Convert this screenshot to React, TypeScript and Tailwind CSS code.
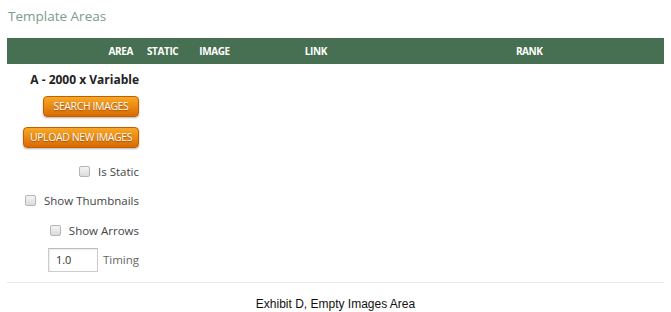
import React from "react";

const font = { fontFamily: '"Open Sans", "DejaVu Sans", sans-serif' };

function Check({ label }: { label: string }) {
  return (
    <div className="flex items-center justify-end gap-[8px]">
      <span className="w-[11px] h-[11px] rounded-[2px] border border-[#b5b5b5] bg-gradient-to-b from-[#f4f4f4] to-[#dcdcdc]" />
      <span className="text-[11.5px] text-[#444]">{label}</span>
    </div>
  );
}

function OrangeBtn({ label, w }: { label: string; w: string }) {
  return (
    <button
      className={`${w} h-[21px] rounded-[4px] border border-[#c06000] bg-gradient-to-b from-[#f7a825] to-[#d96a00] text-white text-[10.5px] tracking-[-0.4px] [text-shadow:0_1px_1px_rgba(120,50,0,0.6)] shadow-[0_1px_2px_rgba(0,0,0,0.3)] flex items-center justify-center`}
    >
      {label}
    </button>
  );
}

export default function App() {
  return (
    <div className="w-[671px] h-[312px] bg-white relative" style={font}>
      <div className="pl-[8px] pt-[6px] h-[38px] text-[13.5px] text-[#7d9a8a]">Template Areas</div>
      <div className="mx-[7px] h-[26px] bg-[#476f51] text-white font-bold text-[10px] tracking-[-0.4px] flex items-center">
        <div className="w-[126px] text-right">AREA</div>
        <div className="ml-[14px]">STATIC</div>
        <div className="ml-[21px]">IMAGE</div>
        <div className="ml-[75px]">LINK</div>
        <div className="ml-[189px]">RANK</div>
      </div>
      <div className="w-[139px] flex flex-col items-end">
        <div className="mt-[9px] h-[14px] flex items-center text-[12px] font-bold text-[#222]">A - 2000 x Variable</div>
        <div className="mt-[9px]"><OrangeBtn label="SEARCH IMAGES" w="w-[96px]" /></div>
        <div className="mt-[10px]"><OrangeBtn label="UPLOAD NEW IMAGES" w="w-[116px]" /></div>
        <div className="mt-[15px]"><Check label="Is Static" /></div>
        <div className="mt-[12px]"><Check label="Show Thumbnails" /></div>
        <div className="mt-[12px]"><Check label="Show Arrows" /></div>
        <div className="mt-[9px] flex items-center gap-[5px]">
          <div className="w-[50px] h-[24px] border border-[#ccc] border-t-[#bbb] shadow-[inset_1px_1px_2px_rgba(0,0,0,0.08)] text-[11px] text-[#333] flex items-center pl-[7px]">1.0</div>
          <span className="text-[11.5px] text-[#666]">Timing</span>
        </div>
      </div>
      <div className="mx-[7px] mt-[10px] border-t border-[#e8e8e8]" />
      <div className="mt-[14px] text-center text-[12px] leading-[14px] text-[#111]" style={{ fontFamily: '"Liberation Sans", Arial, sans-serif' }}>
        Exhibit D, Empty Images Area
      </div>
    </div>
  );
}
